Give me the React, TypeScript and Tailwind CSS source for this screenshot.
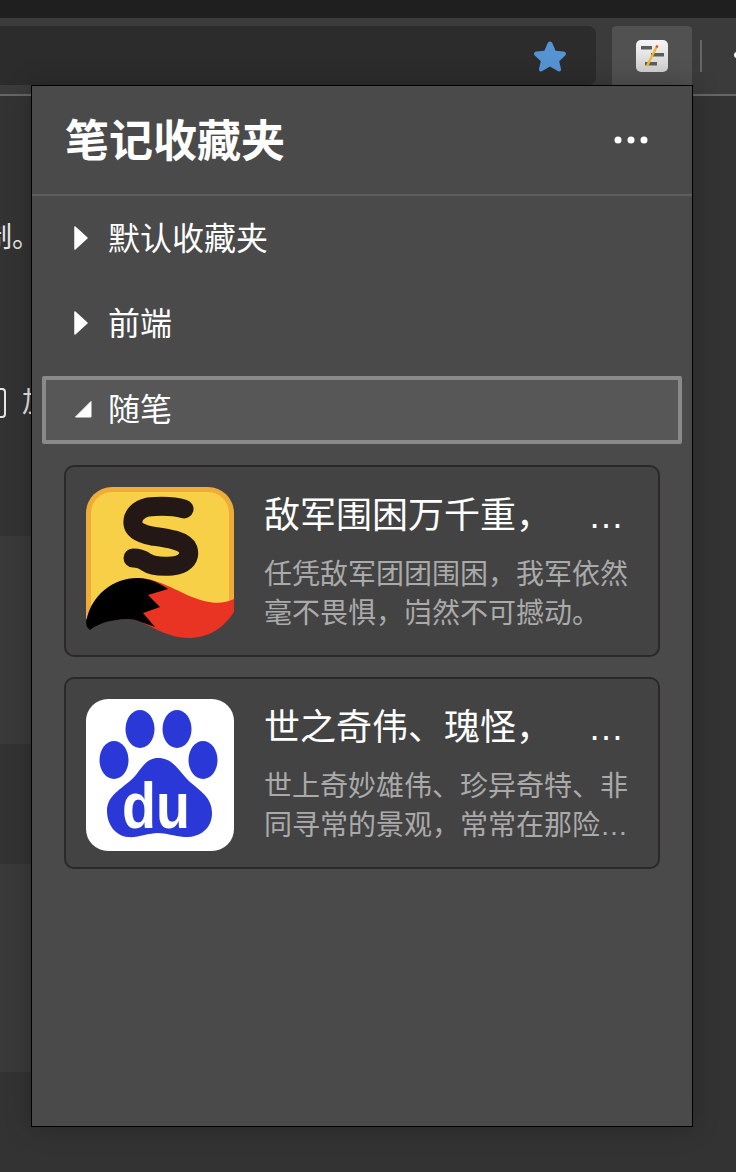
const CJK = "font-['Liberation_Sans','Noto_Sans_CJK_SC',sans-serif]";

function SogouLogo() {
  return (
    <svg viewBox="0 0 148 152" className="w-[148px] h-[152px] shrink-0 block">
      <path d="M26 0H122A26 26 0 0 1 148 26V118L0 132V26A26 26 0 0 1 26 0Z" fill="#eead38" />
      <path d="M26 5H122A21 21 0 0 1 143 26V118H5V26A21 21 0 0 1 26 5Z" fill="#f8d047" />
      <path d="M98 22C88 19 72 19 62 20C52 22 46 29 47 37C48 44 56 47 66 49C80 51 98 53 102 62C105 72 97 78 86 79C74 80 66 79 60 75C56 72 52 71 47 71" fill="none" stroke="#231815" strokeWidth="19" strokeLinecap="round" strokeLinejoin="round" />
      <path d="M51 91C75 91 95 108 118 114C130 117 140 116 148 112V125C135 145 118 151 102 151C85 151 70 142 55 135C45 131 38 132 31 133L40 100Z" fill="#e93323" />
      <path d="M0 136C4 108 28 91 51 91C64 91 73 96 82 102L62 108L74 120L57 126L69 140L55 135C45 131 38 132 31 133C20 134 10 138 4 143L1 140Z" fill="#000" />
    </svg>
  );
}

function BaiduLogo() {
  return (
    <svg viewBox="0 0 148 152" className="w-[148px] h-[152px] shrink-0 block">
      <rect width="148" height="152" rx="22" fill="#fff" />
      <ellipse cx="54" cy="30" rx="14.5" ry="19" fill="#2a38d8" />
      <ellipse cx="91" cy="30" rx="14.5" ry="19" fill="#2a38d8" />
      <ellipse cx="28" cy="61" rx="14.5" ry="19" fill="#2a38d8" />
      <ellipse cx="117" cy="61" rx="14.5" ry="19" fill="#2a38d8" />
      <path d="M72 59C86 59 92 70 100 79C110 90 126 96 126 114C126 131 112 139 98 138C88 137 80 134 72 134C62 134 52 139 42 138C30 137 21 126 21 112C21 98 32 92 44 82C54 74 58 59 72 59Z" fill="#2a38d8" />
      <text x="36" y="129" textLength="68" lengthAdjust="spacingAndGlyphs" fontFamily="'Liberation Sans',sans-serif" fontWeight="700" fontSize="65" fill="#fff">du</text>
    </svg>
  );
}

function ExtIcon() {
  return (
    <svg viewBox="0 0 32 32" className="w-[32px] h-[32px] block">
      <defs>
        <linearGradient id="extg" x1="0" y1="0" x2="0" y2="1">
          <stop offset="0" stopColor="#f5f5f5" />
          <stop offset="1" stopColor="#cfcfcf" />
        </linearGradient>
      </defs>
      <rect width="32" height="32" rx="5" fill="url(#extg)" />
      <rect x="5" y="6" width="11" height="3.5" fill="#5c5c5c" />
      <rect x="15" y="13" width="13" height="3.5" fill="#5c5c5c" />
      <rect x="9" y="22" width="12" height="3.5" fill="#5c5c5c" />
      <path d="M21 6L11 26" stroke="#f2b632" strokeWidth="2.4" />
      <path d="M20 6L22 7" stroke="#e0452c" strokeWidth="2.2" />
    </svg>
  );
}

function Row({ label, open, first }: { label: string; open?: boolean; first?: boolean }) {
  if (open) {
    return (
      <div className="mx-[10px] mt-[19px] h-[68px] flex items-center pl-[28px] border-4 border-[#8a8a8a] rounded-[2px] bg-[#575757]">
        <svg viewBox="0 0 18 18" className="w-[18px] h-[18px] mt-[-3px]">
          <path d="M17 1.5V17H1.5Z" fill="#fff" stroke="#fff" strokeWidth="1" strokeLinejoin="round" />
        </svg>
        <span className="ml-[16px] text-[32px] leading-[40px] text-white">{label}</span>
      </div>
    );
  }
  return (
    <div className={first ? "mx-[10px] mt-[8px] h-[68px] flex items-center pl-[32px]" : "mx-[10px] mt-[17px] h-[68px] flex items-center pl-[32px]"}>
      <svg viewBox="0 0 14 24" className="w-[14px] h-[24px]">
        <path d="M1 1L13 12L1 23Z" fill="#fff" stroke="#fff" strokeWidth="1.5" strokeLinejoin="round" />
      </svg>
      <span className="ml-[20px] mt-[2px] text-[32px] leading-[40px] text-white">{label}</span>
    </div>
  );
}

function Card({ logo, title, desc }: { logo: React.ReactNode; title: string; desc: string }) {
  return (
    <div className="flex items-start gap-[30px] h-[192px] p-[20px] pr-[28px] border-2 border-[#2c2828] rounded-[10px] bg-[#434343]">
      {logo}
      <div className="min-w-0 flex-1">
        <div className="mt-[2px] truncate text-[36px] leading-[54px] text-white">{title}</div>
        <div className="mt-[12px] line-clamp-2 text-[28px] leading-[39px] text-[#aaaaaa]">{desc}</div>
      </div>
    </div>
  );
}

export default function App() {
  return (
    <div className={`relative h-[1172px] w-[736px] overflow-hidden bg-[#333333] ${CJK}`}>
      <div className="h-[18px] bg-[#1f1f1f]" />
      <div className="h-[78px] bg-[#3b3b3b] border-b-2 border-[#666666] flex items-start pt-[8px]">
        <div className="h-[59px] w-[596px] shrink-0 bg-[#2c2c2c] rounded-r-[8px] flex items-center justify-end pr-[29px]">
          <svg viewBox="0 0 34 32" className="w-[34px] h-[32px]">
            <path d="M17 1.5C18 1.5 19 2.3 19.6 3.8L22.6 10.8L30.4 11.5C33 11.8 33.8 14 32 15.7L26.2 21.2L27.9 28.6C28.5 31 26.6 32.3 24.6 31.1L17 26.6L9.4 31.1C7.4 32.3 5.5 31 6.1 28.6L7.8 21.2L2 15.7C0.2 14 1 11.8 3.6 11.5L11.4 10.8L14.4 3.8C15 2.3 16 1.5 17 1.5Z" fill="#5593d3" />
          </svg>
        </div>
        <div className="ml-[16px] h-[59px] w-[80px] shrink-0 bg-[#515151] rounded-t-[4px] flex items-center justify-center">
          <ExtIcon />
        </div>
        <div className="ml-[8px] mt-[14px] h-[32px] w-[2px] shrink-0 bg-[#666666]" />
        <div className="ml-[32px] mt-[26px] h-[6px] w-[6px] shrink-0 rounded-full bg-white" />
      </div>

      <div className="flex flex-col">
        <div className="mt-[122px] -ml-[16px] h-[40px] text-[28px] leading-[40px] text-[#e6e6e6]">制。</div>
        <div className="mt-[125px] h-[40px] flex items-center gap-[16px] -ml-[22px] text-[28px] leading-[40px] text-[#e6e6e6]">
          <div className="h-[30px] w-[28px] rounded-[4px] border-2 border-[#e6e6e6]" />
          <span>加</span>
        </div>
        <div className="mt-[113px] h-[208px] w-[420px] bg-[#3a3a3a]" />
        <div className="mt-[120px] h-[208px] w-[420px] bg-[#3a3a3a]" />
      </div>

      <div className="absolute left-[31px] top-[85px] w-[662px] h-[1042px] border border-black bg-[#4a4a4a] shadow-[0_0_24px_rgba(0,0,0,0.25)] flex flex-col">
        <div className="h-[110px] shrink-0 flex items-center justify-between pl-[33px] pr-[44px] border-b-2 border-[#5e5e5e]">
          <span className="mt-[3px] text-[44px] leading-[60px] font-bold text-white">笔记收藏夹</span>
          <svg viewBox="0 0 34 8" className="w-[34px] h-[8px]">
            <circle cx="4" cy="4" r="3.5" fill="#fff" />
            <circle cx="17" cy="4" r="3.5" fill="#fff" />
            <circle cx="30" cy="4" r="3.5" fill="#fff" />
          </svg>
        </div>
        <Row label="默认收藏夹" first />
        <Row label="前端" />
        <Row label="随笔" open />
        <div className="mx-[32px] mt-[21px] flex flex-col gap-[20px]">
          <Card logo={<SogouLogo />} title={"敌军围困万千重，\u2003我军依然不动"} desc="任凭敌军团团围困，我军依然毫不畏惧，岿然不可撼动。" />
          <Card logo={<BaiduLogo />} title={"世之奇伟、瑰怪，\u2003非常之观"} desc="世上奇妙雄伟、珍异奇特、非同寻常的景观，常常在那险远，而人之所罕至焉。" />
        </div>
      </div>
    </div>
  );
}
